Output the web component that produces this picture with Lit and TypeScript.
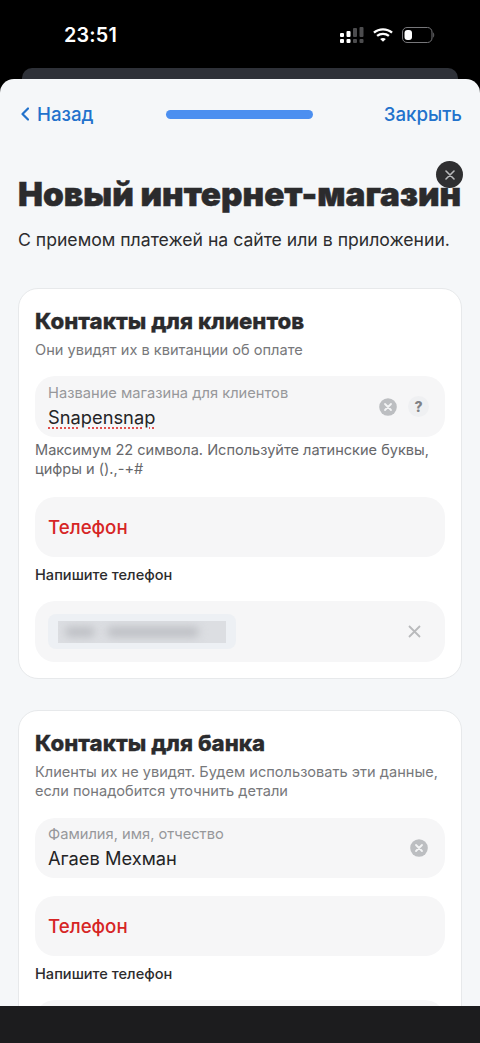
import { LitElement, html, css, svg } from "lit";
import { customElement } from "lit/decorators.js";

const clearIcon = svg`<svg class="ic" width="18" height="18" viewBox="0 0 18 18"><circle cx="9" cy="9" r="8.8" fill="#bcbec1"/><path d="M6 6l6 6M12 6l-6 6" stroke="#f3f4f5" stroke-width="1.8" stroke-linecap="round"/></svg>`;

@customElement("app-root")
export class AppRoot extends LitElement {
  static styles = css`
    :host { display: block; width: 480px; height: 1043px; background: #000; font-family: Inter, "Noto Sans", sans-serif; overflow: hidden; }
    .root { height: 1043px; display: flex; flex-direction: column; position: relative; }
    .status { height: 68px; flex: none; display: flex; align-items: flex-start; color: #fff; position: relative; }
    .time { margin: 24px 0 0 64px; font-size: 19.8px; line-height: 23px; font-weight: 600; letter-spacing: 0.2px; }
    .status-icons { margin: 27px 0 0 auto; padding-right: 44px; display: flex; align-items: flex-start; gap: 9px; height: 17px; }
    .back { height: 11px; flex: none; margin: 0 22px; background: #2e3138; border-radius: 10px 10px 0 0; }
    .sheet { flex: 1; min-height: 0; background: #f5f7f9; border-radius: 14px 14px 0 0; overflow: hidden; position: relative; padding: 0 18px; }
    .nav { height: 70px; display: flex; align-items: center; justify-content: space-between; color: #2272cc; font-size: 18.7px; font-weight: 500; padding: 0 0 0 3px; }
    .nav-back { display: flex; align-items: center; gap: 8px; }
    .progress { width: 147px; height: 9px; border-radius: 5px; background: #4c8ff0; margin-left: 2px; }
    h1 { margin: 25px 0 0; font-size: 33.3px; line-height: 41px; font-weight: 900; color: #2b2b2d; white-space: nowrap; -webkit-text-stroke: 0.5px #2b2b2d; }
    .lead { margin: 13px 0 0; font-size: 17.62px; line-height: 24px; color: #2c2c2e; white-space: nowrap; }
    .card { margin-top: 36px; background: #fff; border: 1px solid #e7e9eb; border-radius: 20px; padding: 17px 16px 16px; }
    .card + .card { margin-top: 31px; }
    h2 { margin: 0; font-size: 22.2px; line-height: 30px; font-weight: 800; color: #2b2b2d; white-space: nowrap; -webkit-text-stroke: 0.3px #2b2b2d; }
    .sub { margin: 5px 0 0; font-size: 14.6px; line-height: 19px; color: #77787b; }
    .field { background: #f6f6f7; border-radius: 20px; display: flex; align-items: center; padding: 0 16px 0 13px; height: 61px; margin-top: 16px; position: relative; }
    .field.short { height: 60px; }
    .field.first { margin-top: 17px; }
    .field.gap { margin-top: 18px; }
    .field.after { margin-top: 16px; }
    .fcol { flex: 1; min-width: 0; display: flex; flex-direction: column; }
    .fcol.text { margin-bottom: 2px; }
    .flabel { font-size: 14.7px; line-height: 18px; color: #97989b; white-space: nowrap; margin-top: 1px; }
    .fval { font-size: 18.3px; line-height: 24px; color: #242426; margin-top: 3px; }
    .spell { text-decoration: underline dotted #e0504e 1.5px; text-underline-offset: 4px; }
    .icons { display: flex; align-items: center; gap: 11px; }
    .icons.solo { margin-right: 1px; }
    .q { width: 21px; height: 21px; border-radius: 50%; background: #eff0f2; color: #808286; font-size: 14px; font-weight: 800; display: flex; align-items: center; justify-content: center; }
    .ic { display: block; }
    .phone-label { color: #d62525; font-size: 18.7px; font-weight: 500; }
    .hint { margin: 4px 0 0; font-size: 14.55px; line-height: 19px; color: #67686b; }
    .write { margin: 9px 0 0; font-size: 14.6px; line-height: 19px; font-weight: 500; color: #2c2c2e; }
    .chip { width: 188px; height: 35px; background: #edf0f4; border-radius: 8px; display: flex; align-items: center; padding: 0 10px; box-sizing: border-box; }
    .blur { width: 170px; height: 22px; background: #dcdee2; display: flex; align-items: center; gap: 12px; padding: 0 7px; box-sizing: border-box; overflow: hidden; }
    .blob { height: 10px; background: #bcbec3; border-radius: 5px; filter: blur(4px); flex: none; }
    .blob.a { width: 30px; }
    .blob.b { width: 92px; margin-left: 0; }
    .x { margin-right: 8px; display: block; }
    .bullet { position: absolute; top: 82px; right: 17px; width: 27px; height: 27px; border-radius: 50%; background: #2f2f31; display: flex; align-items: center; justify-content: center; z-index: 2; }
    .bottom { height: 37px; flex: none; background: #1c1c1e; position: relative; }
  `;

  render() {
    return html`<div class="root">
      <div class="status">
        <div class="time">23:51</div>
        <div class="status-icons">
          <svg width="24" height="17" viewBox="0 0 24 17">
            <g fill="#fff"><rect x="0" y="6" width="4" height="4" rx="1"/><rect x="0" y="12" width="4" height="4" rx="1"/><rect x="6.500" y="4" width="4" height="6" rx="1"/><rect x="6.500" y="12" width="4" height="4" rx="1"/></g>
            <g fill="#4c4c4e"><rect x="13" y="1" width="4" height="9" rx="1"/><rect x="13" y="12" width="4" height="4" rx="1"/><rect x="19.500" y="0" width="4" height="10" rx="1"/><rect x="19.500" y="12" width="4" height="4" rx="1"/></g>
          </svg>
          <svg width="20" height="16" viewBox="0 0 21 16" fill="none" stroke="#fff" stroke-width="2.400">
            <path d="M1 5.600C6.300 .8 14.700 .8 20 5.600"/><path d="M4.300 9C7.800 6 13.200 6 16.700 9"/><path d="M10.500 15.200l-3-3c1.800-1.400 4.200-1.400 6 0z" fill="#fff" stroke="none"/>
          </svg>
          <svg width="34" height="16" viewBox="0 0 34 16">
            <rect x="0.500" y="0.500" width="29.500" height="15" rx="4.500" fill="none" stroke="#77777a"/>
            <rect x="2.500" y="3" width="7.500" height="10" rx="3" fill="#fff"/>
            <path d="M31.300 5.500c1.200.4 1.200 4.600 0 5z" fill="#77777a"/>
          </svg>
        </div>
      </div>
      <div class="back"></div>
      <div class="sheet">
        <div class="nav">
          <div class="nav-back">
            <svg width="8" height="14" viewBox="0 0 8 14" fill="none"><path d="M7 1.500L1.500 7 7 12.500" stroke="#2272cc" stroke-width="2.200" stroke-linecap="round" stroke-linejoin="round"/></svg>
            <span>Назад</span>
          </div>
          <div class="progress"></div>
          <div>Закрыть</div>
        </div>
        <div class="bullet">
          <svg width="10" height="10" viewBox="0 0 10 10"><path d="M1 1l8 8M9 1l-8 8" stroke="#b9babc" stroke-width="1.600" stroke-linecap="round"/></svg>
        </div>
        <h1>Новый интернет-магазин</h1>
        <p class="lead">С приемом платежей на сайте или в приложении.</p>

        <section class="card">
          <h2>Контакты для клиентов</h2>
          <p class="sub">Они увидят их в квитанции об оплате</p>
          <div class="field">
            <div class="fcol text">
              <span class="flabel">Название магазина для клиентов</span>
              <span class="fval"><span class="spell">Snapensnap</span></span>
            </div>
            <div class="icons">${clearIcon}<div class="q">?</div></div>
          </div>
          <p class="hint">Максимум 22 символа. Используйте латинские буквы, цифры и ().,-+#</p>
          <div class="field short gap"><span class="phone-label">Телефон</span></div>
          <p class="write">Напишите телефон</p>
          <div class="field after">
            <div class="fcol">
              <div class="chip"><div class="blur">
                <div class="blob a"></div>
                <div class="blob b"></div>
              </div></div>
            </div>
            <svg class="x" width="13" height="13" viewBox="0 0 13 13"><path d="M1 1l11 11M12 1L1 12" stroke="#b9babc" stroke-width="1.800"/></svg>
          </div>
        </section>

        <section class="card">
          <h2>Контакты для банка</h2>
          <p class="sub">Клиенты их не увидят. Будем использовать эти данные, если понадобится уточнить детали</p>
          <div class="field short first">
            <div class="fcol text">
              <span class="flabel">Фамилия, имя, отчество</span>
              <span class="fval">Агаев Мехман</span>
            </div>
            <div class="icons solo">${clearIcon}</div>
          </div>
          <div class="field short gap"><span class="phone-label">Телефон</span></div>
          <p class="write">Напишите телефон</p>
          <div class="field after"></div>
        </section>
      </div>
      <div class="bottom"></div>
    </div>`;
  }
}
